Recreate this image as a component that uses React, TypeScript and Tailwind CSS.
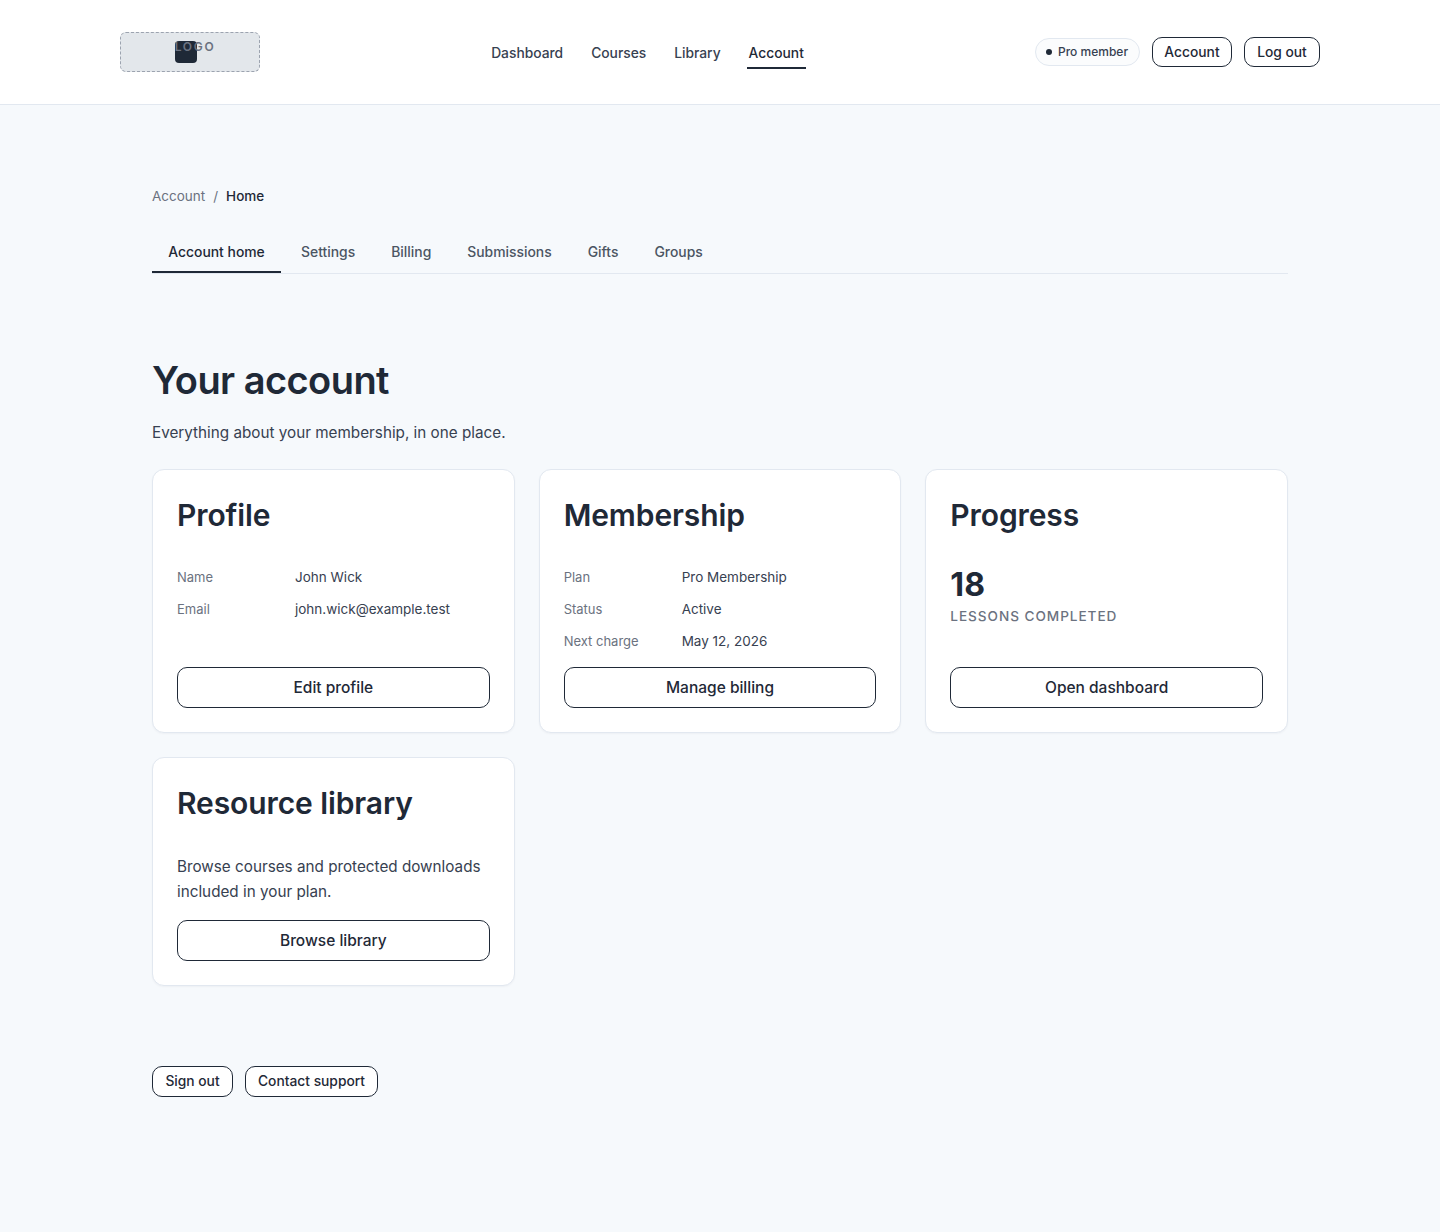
import React from "react";

const outlineBtn = "flex items-center justify-center border border-[#1f2937] bg-white text-[#1f2937] rounded-[10px] font-medium";

function Row({ label, value }: { label: string; value: string }) {
  return (
    <div className="flex items-baseline h-[24px] leading-[24px] mb-[8px]">
      <span className="w-[118px] text-[13px] text-[#6b7280]">{label}</span>
      <span className="text-[13.5px] text-[#374151]">{value}</span>
    </div>
  );
}

function Card({ title, action, children }: { title: string; action: string; children: React.ReactNode }) {
  return (
    <div className="flex flex-col bg-white border border-[#e2e8f0] rounded-[12px] p-[24px] shadow-[0_1px_2px_rgba(15,23,42,0.04)]">
      <h2 className="text-[30px] leading-[42px] font-semibold text-[#1f2937] tracking-[-0.1px] mb-[29px]">{title}</h2>
      <div className="flex-1">{children}</div>
      <button className={`${outlineBtn} w-full h-[41px] text-[15.5px]`}>{action}</button>
    </div>
  );
}

const navItem = "px-[2px] pt-[8px] pb-[4px] border-b-2 border-transparent";
const tab = "ml-[4px] px-[16px] h-[41px] leading-[41px]";

export default function App() {
  return (
    <div className="min-h-[1232px] bg-[#f6f9fc] font-['Inter',sans-serif] text-[#1f2937]">
      <header className="h-[105px] bg-white border-b border-[#e2e8f0] px-[120px] flex items-center justify-between">
        <div className="relative w-[140px] h-[40px] bg-[#e3e7eb] border border-dashed border-[#9ca3af] rounded-[6px] flex justify-center">
          <div className="absolute left-[54px] top-[8px] w-[22px] h-[22px] rounded-[4px] bg-[#1f2937]" />
          <span className="relative text-[12px] font-semibold tracking-[0.14em] text-[#6b7280] leading-[28px] ml-[10px]">LOGO</span>
        </div>
        <nav className="flex items-center gap-[24px] text-[13.8px] font-medium text-[#374151]">
          <a className={navItem}>Dashboard</a>
          <a className={navItem}>Courses</a>
          <a className={navItem}>Library</a>
          <a className="px-[2px] pt-[8px] pb-[4px] border-b-2 text-[#1f2937] border-[#1f2937]">Account</a>
        </nav>
        <div className="flex items-center gap-[12px]">
          <span className="flex items-center gap-[6px] h-[28px] w-[105px] px-[10px] border border-[#e2e8f0] rounded-full bg-[#fbfcfd] text-[12px] font-medium text-[#374151]">
            <span className="w-[6px] h-[6px] rounded-full bg-[#1f2937]" />
            Pro member
          </span>
          <button className={`${outlineBtn} h-[30px] w-[80px] text-[13.8px]`}>Account</button>
          <button className={`${outlineBtn} h-[30px] w-[76px] text-[13.8px]`}>Log out</button>
        </div>
      </header>

      <main className="px-[152px] pt-[80px]">
        <div className="flex items-center gap-[8px] text-[13.5px] leading-[22px] text-[#6b7280]">
          <span>Account</span>
          <span>/</span>
          <span className="text-[#1f2937] font-medium">Home</span>
        </div>
        <div className="flex mt-[25px] border-b border-[#e2e8f0] text-[13.9px] font-medium text-[#4b5563]">
          <a className="w-[129px] text-center h-[41px] leading-[41px] -mb-[1px] border-b-2 border-[#1f2937] text-[#1f2937]">Account home</a>
          <a className={tab}>Settings</a>
          <a className={tab}>Billing</a>
          <a className={tab}>Submissions</a>
          <a className={tab}>Gifts</a>
          <a className={tab}>Groups</a>
        </div>

        <h1 className="mt-[80px] text-[38px] leading-[52px] font-semibold tracking-[-0.55px] text-[#1f2937]">Your account</h1>
        <p className="mt-[14px] text-[15.25px] leading-[26px] text-[#374151]">Everything about your membership, in one place.</p>

        <div className="grid grid-cols-3 gap-[24px] mt-[23px]">
          <Card title="Profile" action="Edit profile">
            <Row label="Name" value="John Wick" />
            <Row label="Email" value="john.wick@example.test" />
          </Card>
          <Card title="Membership" action="Manage billing">
            <div className="pb-[6px]">
              <Row label="Plan" value="Pro Membership" />
              <Row label="Status" value="Active" />
              <Row label="Next charge" value="May 12, 2026" />
            </div>
          </Card>
          <Card title="Progress" action="Open dashboard">
            <div className="text-[32px] leading-[40px] font-bold text-[#1f2937]">18</div>
            <div className="text-[13.6px] leading-[22px] font-medium tracking-[0.95px] text-[#6b7280]">LESSONS COMPLETED</div>
          </Card>
          <Card title="Resource library" action="Browse library">
            <p className="pt-[1px] text-[15.25px] leading-[25px] text-[#374151] mb-[16px]">Browse courses and protected downloads included in your plan.</p>
          </Card>
        </div>

        <div className="flex gap-[12px] mt-[80px]">
          <button className={`${outlineBtn} h-[31px] w-[81px] text-[13.8px]`}>Sign out</button>
          <button className={`${outlineBtn} h-[31px] w-[133px] text-[13.8px]`}>Contact support</button>
        </div>
      </main>
    </div>
  );
}
